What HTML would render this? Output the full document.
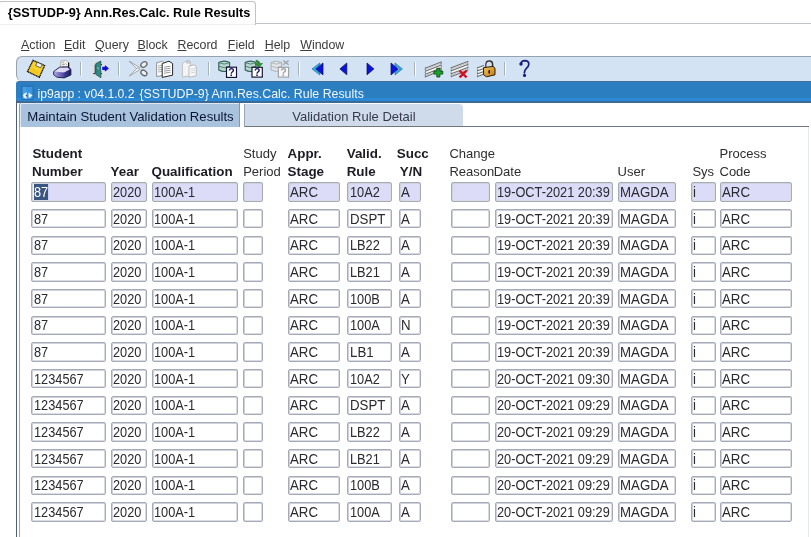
<!DOCTYPE html>
<html><head><meta charset="utf-8"><style>
html,body{margin:0;padding:0}
body{width:811px;height:537px;overflow:hidden;background:#fff;position:relative;font-family:"Liberation Sans",sans-serif}
#ttab{position:absolute;left:-2px;top:1px;width:256px;height:23px;border:1px solid #bfc3ca;border-bottom:none;border-radius:4px 4px 0 0;background:#fff}
#ttabline{position:absolute;left:255px;top:23px;width:560px;height:1px;background:#bfc3ca}
#ttext{position:absolute;left:7.8px;top:4.6px;font-weight:bold;font-size:12.75px;line-height:15px;color:#000;white-space:pre}
.m{position:absolute;top:38.3px;font-size:12.4px;line-height:14px;color:#3c3c3c;white-space:pre}
.m u{text-decoration:underline;text-underline-offset:1px}
#tb{position:absolute;left:16px;top:56px;width:820px;height:25px;border:1px solid #98a2ae;border-bottom:none;border-right:none;border-radius:6px 0 0 6px;background:#d4e3f4;box-sizing:border-box}
#wbar{position:absolute;left:16px;top:81px;width:820px;height:22px;background:linear-gradient(#45709a 0,#45709a 1px,#2b7fc1 1.5px,#2b7fc1 16.5px,#2a89d6 17px,#2a89d6 20px,#3b6a95 20.5px,#3b6a95 22px);border-radius:3px 0 0 0}
#wtext{position:absolute;left:37.6px;top:86.7px;font-size:12.2px;line-height:14px;color:#f0f8ff;white-space:pre}
#wleft{position:absolute;left:16px;top:100px;width:1px;height:440px;background:#4d5e7e}
#pleft{position:absolute;left:19px;top:126px;width:1px;height:420px;background:#9aa6b8}
#pright{position:absolute;left:808px;top:127px;width:1px;height:420px;background:#e4e8ef}
#ptop{position:absolute;left:462px;top:126px;width:347px;height:1px;background:#6f7782}
#tab1{position:absolute;left:19px;top:103px;width:221px;height:23.6px;background:#a9c3df;border-left:1px solid #8d9db2;border-right:1px solid #7f98b4;box-sizing:border-box;box-shadow:inset 1px 1px 0 #dfe9f4;border-radius:2px 0 0 0}
#tab1t{position:absolute;left:27.2px;top:109px;font-size:13.15px;line-height:15px;color:#081530;white-space:pre}
#tab2{position:absolute;left:243.5px;top:104px;width:218px;height:22px;background:#cfdbeb;border-left:1px solid #9aa6b8;border-bottom:1px solid #6f7782;border-radius:0 4px 0 0}
#tab2t{position:absolute;left:292.3px;top:109px;font-size:13px;line-height:15px;color:#343a4a;white-space:pre}
.h{position:absolute;font-size:13px;line-height:15px;color:#2e2e2e;white-space:pre}
.h.b{font-weight:bold;color:#1c1c24;font-size:13.4px}
.f{position:absolute;height:19.4px;border:1px solid #a6abb7;box-shadow:inset 1px 1px 0 #cdd1d9,inset -1px -1px 0 #d8dbe2;border-radius:2px;background:#fff;box-sizing:border-box}
.f.hl{background:#dcdcf9}
.t{position:absolute;left:1.3px;top:0.7px;font-size:14.5px;line-height:17px;color:#2a2a30;white-space:pre;transform:scaleX(0.915);transform-origin:0 0}
.t.d{transform:scaleX(0.88)}
.sel{background:#3b5581;color:#fff}
</style></head><body><div id="root" style="position:absolute;left:0;top:0;width:811px;height:537px;overflow:hidden;will-change:transform">
<div id="ttab"></div><div id="ttabline"></div><div style="position:absolute;left:0;top:24px;width:255px;height:1px;background:#eceef1"></div>
<div id="ttext">{SSTUDP-9} Ann.Res.Calc. Rule Results</div>
<div class="m" style="left:21.0px"><u>A</u>ction</div>
<div class="m" style="left:64.0px"><u>E</u>dit</div>
<div class="m" style="left:95.1px"><u>Q</u>uery</div>
<div class="m" style="left:137.4px"><u>B</u>lock</div>
<div class="m" style="left:177.5px"><u>R</u>ecord</div>
<div class="m" style="left:227.8px"><u>F</u>ield</div>
<div class="m" style="left:264.7px"><u>H</u>elp</div>
<div class="m" style="left:300.2px"><u>W</u>indow</div>
<div id="tb"></div>
<div id="wbar"></div>
<div id="wtext">ip9app : v04.1.0.2 <span style="display:inline-block;width:1.6px"></span><span style="font-size:12.35px">{SSTUDP-9} Ann.Res.Calc. Rule Results</span></div>
<div id="wleft"></div>
<div id="tab1"></div><div id="tab1t">Maintain Student Validation Results</div>
<div id="tab2"></div><div id="tab2t">Validation Rule Detail</div>
<div id="ptop"></div><div id="pleft"></div><div id="pright"></div>
<svg style="position:absolute;left:0;top:0" width="811" height="110" viewBox="0 0 811 110">
<defs>
<linearGradient id="prn" x1="0" y1="0" x2="1" y2="0"><stop offset="0" stop-color="#b4acdf"/><stop offset="0.35" stop-color="#7a70c0"/><stop offset="0.65" stop-color="#3c3890"/><stop offset="1" stop-color="#1a1a5c"/></linearGradient>
<linearGradient id="lock" x1="0" y1="0" x2="1" y2="1"><stop offset="0" stop-color="#f7c85a"/><stop offset="1" stop-color="#c07818"/></linearGradient>
</defs>
<!-- separators -->
<g stroke-width="1">
<path d="M80.5 62v13.5M118.5 62v13.5M208.5 62v13.5M298.5 62v13.5M414.5 62v13.5M504.5 62v13.5" stroke="#a9b1bb"/>
<path d="M81.5 62v13.5M119.5 62v13.5M209.5 62v13.5M299.5 62v13.5M415.5 62v13.5M505.5 62v13.5" stroke="#ffffff"/>
</g>
<!-- floppy -->
<polygon points="33,60.3 44.6,65.6 39.3,77.3 27.5,71.6" fill="#f6d22a" stroke="#111111" stroke-width="1.35" stroke-dasharray="1.3 0.45"/>
<polygon points="37.2,62.2 42.2,64.5 40.6,67.8 35.8,65.6" fill="#f2f2ee" stroke="#333" stroke-width="0.7"/>
<polygon points="31.5,68 39,71.5 37.6,74.5 30.1,71" fill="#f0c020" opacity="0.6"/>
<!-- printer -->
<path d="M60.6 67.8 L60.9 61.2 L65.6 60.3 L68.6 62.6 L68.7 68.2 Z" fill="#f6f6f2" stroke="#9a9a9a" stroke-width="0.8"/>
<path d="M68.6 62.6 L68.7 68.2" stroke="#111" stroke-width="1.2"/>
<path d="M62.2 62.8h2.2M62.2 64.6h2.6M62.2 66.4h2.2M65.5 63.5l1.8 1.6" stroke="#8a8a80" stroke-width="0.8"/>
<path d="M53.6 71.6 L59.5 67.2 L67.8 66.8 L70.9 69.2 L70.9 75 L64.2 77.9 L57.2 77.3 L53.7 74.8 Z" fill="url(#prn)" stroke="#181848" stroke-width="0.9"/>
<path d="M54.5 71.4 L59.8 67.8 L67.6 67.5 L69.8 69.4 L64 72.4 Z" fill="#e4e0f6" opacity="0.95"/>
<path d="M57 74.3 L63 75.3" stroke="#6a62b0" stroke-width="0.8" opacity="0.6"/>
<!-- exit door -->
<rect x="91.5" y="61" width="15" height="16" fill="#e8e0b8" opacity="0.22"/>
<path d="M95.2 64.6 V73.6 H93.2" stroke="#2a2a2a" stroke-width="1" fill="none"/>
<path d="M95.8 63.6 L100.8 61 L100.9 77.8 L95.8 74.4 Z" fill="#2e8a84" stroke="#1c4846" stroke-width="0.7"/>
<path d="M97.5 67 L98.6 69.5" stroke="#a8e0d8" stroke-width="0.8"/>
<path d="M101 64.6 H102 M101 73.6 H102" stroke="#222" stroke-width="1"/>
<path d="M101.8 66.3 H104.6 V64.2 L109.4 68.4 L104.6 72.6 V70.5 H101.8 Z" fill="#1010d8" stroke="#ffffff" stroke-width="0.7"/>
<!-- scissors -->
<path d="M129.2 61.2 L139.6 67.4 L138 69.8 Z" fill="#fbfbfb" stroke="#8c9096" stroke-width="0.8" stroke-linejoin="round"/>
<path d="M129.2 76 L139.6 69.8 L138 67.4 Z" fill="#fbfbfb" stroke="#8c9096" stroke-width="0.8" stroke-linejoin="round"/>
<ellipse cx="143.9" cy="64.5" rx="3.3" ry="2.4" fill="#eef0f2" stroke="#64686e" stroke-width="1.3" transform="rotate(-35 143.9 64.5)"/>
<ellipse cx="143.9" cy="72.9" rx="3.3" ry="2.4" fill="#eef0f2" stroke="#64686e" stroke-width="1.3" transform="rotate(35 143.9 72.9)"/>
<!-- copy -->
<path d="M156.6 62.8 L162.5 61.2 L164 62.6 L163.5 75.2 L156.6 76.6 Z" fill="#fbfbfb" stroke="#7a7e84" stroke-width="0.8"/>
<path d="M158 66l4 -0.6M158 68l4 -0.6M158 70l4 -0.6M158 72l4 -0.6" stroke="#8c9096" stroke-width="0.7"/>
<path d="M162.2 63.5 L169 61.2 L172.6 63.5 L172.6 75.2 L162.2 77.4 Z" fill="#ffffff" stroke="#1a1a1a" stroke-width="0.95"/>
<path d="M164 67.2l6.5 -1M164 69.2l6.5 -1M164 71.2l6.5 -1M164 73.2l6.5 -1" stroke="#777b80" stroke-width="0.75"/>
<!-- paste (disabled) -->
<path d="M182.4 63 L188 60.4 L190.5 62 L190.2 75.8 L182.4 77 Z" fill="#f4f4f4" stroke="#b4b8bc" stroke-width="0.8"/>
<path d="M186.5 61 h3 v2.2 h-3z" fill="#d8d8d8" stroke="#b0b4b8" stroke-width="0.6"/>
<path d="M189 66.2 L194 64.8 L196.2 66.2 L196.2 75.8 L189 77.2 Z" fill="#fbfbfb" stroke="#a8acb0" stroke-width="0.8"/>
<path d="M190.5 69l4.5 -0.7M190.5 71l4.5 -0.7M190.5 73l4.5 -0.7" stroke="#c0c4c8" stroke-width="0.7"/>
<!-- query 1 -->
<g>
<path d="M218.8 62.6 Q224.2 59.6 229.6 62.6 V70 Q224.2 73 218.8 70 Z" fill="#b8d6ce" stroke="#2c5c54" stroke-width="1.1"/>
<path d="M218.8 62.6 Q224.2 65.6 229.6 62.6 M218.8 66.2 Q224.2 69.2 229.6 66.2" stroke="#3a6a62" stroke-width="0.8" fill="none"/>
<rect x="226.5" y="67.2" width="10" height="10.2" fill="#ffffff" stroke="#101030" stroke-width="1.15"/>
<text x="231.5" y="76.2" font-family="Liberation Sans" font-weight="bold" font-size="10.5" fill="#101060" text-anchor="middle">?</text>
</g>
<!-- query 2 (execute) -->
<g>
<path d="M245.2 62.6 Q250.5 59.6 255.9 62.6 V70 Q250.5 73 245.2 70 Z" fill="#b8d6ce" stroke="#2c5c54" stroke-width="1.1"/>
<path d="M245.2 62.6 Q250.5 65.6 255.9 62.6 M245.2 66.2 Q250.5 69.2 255.9 66.2" stroke="#3a6a62" stroke-width="0.8" fill="none"/>
<path d="M256 60.2 Q259.5 60.6 260.2 63.6 L262.6 63.4 L258.8 67.6 L255.2 63.8 L257.6 63.8 Q257.2 62 256 61.8 Z" fill="#2c9a2c" stroke="#1a5a1a" stroke-width="0.5"/>
<rect x="252" y="67.3" width="10.3" height="9.8" fill="#ffffff" stroke="#101030" stroke-width="1.15"/>
<text x="257.2" y="76.2" font-family="Liberation Sans" font-weight="bold" font-size="10.5" fill="#101060" text-anchor="middle">?</text>
</g>
<!-- query 3 (cancel, disabled) -->
<g>
<path d="M271 62.6 Q276.3 59.6 281.6 62.6 V70 Q276.3 73 271 70 Z" fill="#e0e4e6" stroke="#a8aeb2" stroke-width="1"/>
<path d="M271 62.6 Q276.3 65.6 281.6 62.6 M271 66.2 Q276.3 69.2 281.6 66.2" stroke="#a8aeb2" stroke-width="0.8" fill="none"/>
<path d="M283.2 60.5 L288.6 64.8 M288.6 60.5 L283.2 64.8" stroke="#9ca0a4" stroke-width="1.2"/>
<rect x="278.3" y="67.3" width="10.3" height="9.8" fill="#f8f8f8" stroke="#9a9ea2" stroke-width="1.1"/>
<text x="283.5" y="76.2" font-family="Liberation Sans" font-weight="bold" font-size="10.5" fill="#9a9ea2" text-anchor="middle">?</text>
</g>
<!-- nav -->
<path d="M319.8 63 L312 68.9 L319.8 74.9 L319.8 72.6 L315 68.9 L319.8 65.2 Z" fill="#30b4e8" stroke="#1a5a90" stroke-width="0.6"/>
<path d="M323 63 L316 68.9 L323 74.9 Z" fill="#0a14e0" stroke="#06085a" stroke-width="0.7"/>
<path d="M346.8 63 L339.9 68.9 L346.8 74.8 Z" fill="#0a14e0" stroke="#06085a" stroke-width="0.7"/>
<path d="M367 63 L373.9 68.9 L367 74.8 Z" fill="#0a14e0" stroke="#06085a" stroke-width="0.7"/>
<path d="M391 63 L398.1 68.9 L391 74.9 Z" fill="#0a14e0" stroke="#06085a" stroke-width="0.7"/>
<path d="M395 63 L402.4 68.9 L395 74.9 L395 72.6 L399.8 68.9 L395 65.2 Z" fill="#30b4e8" stroke="#1a5a90" stroke-width="0.6"/>
<!-- insert record -->
<g>
<path d="M425.3 68.2 L441.3 62 L441.3 70.6 L425.3 76.8 Z" fill="#f6f6f4"/>
<path d="M425.3 68.2 L441.3 62 M425.3 71.2 L441.3 65 M425.3 74.2 L441.3 68 M425.3 76.8 L441.3 70.6" stroke="#6a6e72" stroke-width="1.1"/>
<path d="M425.3 69.5 L441.3 63.3 M425.3 75.5 L441.3 69.3" stroke="#c4c6c8" stroke-width="1.2"/>
<path d="M425.3 67.5 V77.5 M441.3 61.6 V71" stroke="#4a4e52" stroke-width="0.8" stroke-dasharray="1 0.5"/>
<path d="M436.8 68.2 H439.9 V71.1 H442.8 V74.1 H439.9 V77 H436.8 V74.1 H433.9 V71.1 H436.8 Z" fill="#1aa42c" stroke="#0a4012" stroke-width="0.8"/>
</g>
<!-- delete record -->
<g>
<path d="M451.2 67.8 L467.8 61.6 L467.8 70.2 L451.2 76.4 Z" fill="#f6f6f4"/>
<path d="M451.2 67.8 L467.8 61.6 M451.2 70.8 L467.8 64.6 M451.2 73.8 L467.8 67.6 M451.2 76.4 L467.8 70.2" stroke="#6a6e72" stroke-width="1.1"/>
<path d="M451.2 69.1 L467.8 62.9 M451.2 75.1 L467.8 68.9" stroke="#c4c6c8" stroke-width="1.2"/>
<path d="M451.2 67.2 V77.2 M467.8 61 V70.6" stroke="#4a4e52" stroke-width="0.8" stroke-dasharray="1 0.5"/>
<path d="M459.6 70.6 L466.6 77.4 M466.6 70.6 L459.6 77.4" stroke="#d41020" stroke-width="2.3"/>
</g>
<!-- lock record -->
<g>
<path d="M477.5 67.8 L484 65.4 L484 74 L477.5 76.4 Z" fill="#f6f6f4"/>
<path d="M477.5 67.8 L484 65.4 M477.5 70.8 L484 68.4 M477.5 73.8 L484 71.4 M477.5 76.4 L484 74" stroke="#6a6e72" stroke-width="1.1"/>
<path d="M477.5 67.2 V77.2" stroke="#4a4e52" stroke-width="0.8" stroke-dasharray="1 0.5"/>
<path d="M486 67.5 V64.6 Q486 61 489.3 61 Q492.6 61 492.6 64.6 V67.2" stroke="#2e2e2e" stroke-width="1.5" fill="none"/>
<path d="M486.6 67 V64.8 Q486.6 61.8 489.3 61.8" stroke="#d8d8d8" stroke-width="0.6" fill="none"/>
<path d="M483.6 67.6 L493 66.4 L495 68.2 L495 74.8 L486.6 76.8 L483.6 74.8 Z" fill="url(#lock)" stroke="#2a1c08" stroke-width="1"/>
<path d="M488.4 70.2 L490 70 L490 73.4 L488.4 73.6 Z" fill="#2a1a08"/>
</g>
<!-- help -->
<path d="M520.8 63.8 Q521.4 60.6 524.8 60.6 Q528.9 60.8 528.8 64.2 Q528.6 66.8 526.2 68.6 Q524.5 70 524.4 72.8" stroke="#1c1c80" stroke-width="1.75" fill="none" stroke-linecap="round"/>
<circle cx="521" cy="64" r="1.7" fill="#1c1c80"/>
<circle cx="524.5" cy="75.4" r="1.6" fill="#1c1c80"/>
<!-- window icon -->
<rect x="22" y="86.2" width="11" height="13.4" fill="#3b95dc" stroke="#2068ac" stroke-width="0.9"/>
<rect x="22.6" y="86.8" width="3.5" height="12.2" fill="#55a8ea" opacity="0.5"/>
<path d="M26.6 92.2 L26.6 99 L25.6 98.6 L25 97.8 L23.6 97.8 L23.6 96.4 L22.8 95.6 L23.6 94.8 L23.6 93.4 L25 93.4 L25.6 92.6 Z" fill="#f4fbff"/>
<circle cx="26.4" cy="95.6" r="0.9" fill="#2a6aa8"/>
<path d="M28.6 92.6 L32.6 95.6 L28.6 98.6 Z" fill="#f4fbff"/>
</svg>

<div class="h b" style="left:32.4px;top:145.8px">Student</div>
<div class="h b" style="left:32.0px;top:163.7px">Number</div>
<div class="h b" style="left:110.6px;top:163.7px">Year</div>
<div class="h b" style="left:151.5px;top:163.7px">Qualification</div>
<div class="h" style="left:243.2px;top:145.8px">Study</div>
<div class="h" style="left:243.2px;top:163.7px">Period</div>
<div class="h b" style="left:287.6px;top:145.8px">Appr.</div>
<div class="h b" style="left:287.6px;top:163.7px">Stage</div>
<div class="h b" style="left:346.7px;top:145.8px">Valid.</div>
<div class="h b" style="left:346.7px;top:163.7px">Rule</div>
<div class="h b" style="left:396.8px;top:145.8px">Succ</div>
<div class="h b" style="left:399.8px;top:163.7px">Y/N</div>
<div class="h" style="left:449.4px;top:145.8px">Change</div>
<div class="h" style="left:449.4px;top:163.7px">Reason</div>
<div class="h" style="left:493.7px;top:163.7px">Date</div>
<div class="h" style="left:617.6px;top:163.7px">User</div>
<div class="h" style="left:692.4px;top:163.7px">Sys</div>
<div class="h" style="left:719.5px;top:145.8px">Process</div>
<div class="h" style="left:719.5px;top:163.7px">Code</div>
<div class="f hl" style="left:31.3px;top:182.20px;width:74.5px"><span class="t d"><span class="sel">87</span></span></div>
<div class="f hl" style="left:110.5px;top:182.20px;width:36.3px"><span class="t d">2020</span></div>
<div class="f hl" style="left:151.5px;top:182.20px;width:86.5px"><span class="t d">100A-1</span></div>
<div class="f hl" style="left:243.3px;top:182.20px;width:19.4px"></div>
<div class="f hl" style="left:288.0px;top:182.20px;width:51.9px"><span class="t">ARC</span></div>
<div class="f hl" style="left:347.3px;top:182.20px;width:45.0px"><span class="t d">10A2</span></div>
<div class="f hl" style="left:399.0px;top:182.20px;width:22.2px"><span class="t">A</span></div>
<div class="f hl" style="left:450.7px;top:182.20px;width:39.7px"></div>
<div class="f hl" style="left:494.7px;top:182.20px;width:118.3px"><span class="t d">19-OCT-2021 20:39</span></div>
<div class="f hl" style="left:618.2px;top:182.20px;width:57.6px"><span class="t">MAGDA</span></div>
<div class="f hl" style="left:691.2px;top:182.20px;width:24.8px"><span class="t">i</span></div>
<div class="f hl" style="left:720.0px;top:182.20px;width:72.2px"><span class="t">ARC</span></div>
<div class="f" style="left:31.3px;top:208.88px;width:74.5px"><span class="t d">87</span></div>
<div class="f" style="left:110.5px;top:208.88px;width:36.3px"><span class="t d">2020</span></div>
<div class="f" style="left:151.5px;top:208.88px;width:86.5px"><span class="t d">100A-1</span></div>
<div class="f" style="left:243.3px;top:208.88px;width:19.4px"></div>
<div class="f" style="left:288.0px;top:208.88px;width:51.9px"><span class="t">ARC</span></div>
<div class="f" style="left:347.3px;top:208.88px;width:45.0px"><span class="t">DSPT</span></div>
<div class="f" style="left:399.0px;top:208.88px;width:22.2px"><span class="t">A</span></div>
<div class="f" style="left:450.7px;top:208.88px;width:39.7px"></div>
<div class="f" style="left:494.7px;top:208.88px;width:118.3px"><span class="t d">19-OCT-2021 20:39</span></div>
<div class="f" style="left:618.2px;top:208.88px;width:57.6px"><span class="t">MAGDA</span></div>
<div class="f" style="left:691.2px;top:208.88px;width:24.8px"><span class="t">i</span></div>
<div class="f" style="left:720.0px;top:208.88px;width:72.2px"><span class="t">ARC</span></div>
<div class="f" style="left:31.3px;top:235.56px;width:74.5px"><span class="t d">87</span></div>
<div class="f" style="left:110.5px;top:235.56px;width:36.3px"><span class="t d">2020</span></div>
<div class="f" style="left:151.5px;top:235.56px;width:86.5px"><span class="t d">100A-1</span></div>
<div class="f" style="left:243.3px;top:235.56px;width:19.4px"></div>
<div class="f" style="left:288.0px;top:235.56px;width:51.9px"><span class="t">ARC</span></div>
<div class="f" style="left:347.3px;top:235.56px;width:45.0px"><span class="t d">LB22</span></div>
<div class="f" style="left:399.0px;top:235.56px;width:22.2px"><span class="t">A</span></div>
<div class="f" style="left:450.7px;top:235.56px;width:39.7px"></div>
<div class="f" style="left:494.7px;top:235.56px;width:118.3px"><span class="t d">19-OCT-2021 20:39</span></div>
<div class="f" style="left:618.2px;top:235.56px;width:57.6px"><span class="t">MAGDA</span></div>
<div class="f" style="left:691.2px;top:235.56px;width:24.8px"><span class="t">i</span></div>
<div class="f" style="left:720.0px;top:235.56px;width:72.2px"><span class="t">ARC</span></div>
<div class="f" style="left:31.3px;top:262.24px;width:74.5px"><span class="t d">87</span></div>
<div class="f" style="left:110.5px;top:262.24px;width:36.3px"><span class="t d">2020</span></div>
<div class="f" style="left:151.5px;top:262.24px;width:86.5px"><span class="t d">100A-1</span></div>
<div class="f" style="left:243.3px;top:262.24px;width:19.4px"></div>
<div class="f" style="left:288.0px;top:262.24px;width:51.9px"><span class="t">ARC</span></div>
<div class="f" style="left:347.3px;top:262.24px;width:45.0px"><span class="t d">LB21</span></div>
<div class="f" style="left:399.0px;top:262.24px;width:22.2px"><span class="t">A</span></div>
<div class="f" style="left:450.7px;top:262.24px;width:39.7px"></div>
<div class="f" style="left:494.7px;top:262.24px;width:118.3px"><span class="t d">19-OCT-2021 20:39</span></div>
<div class="f" style="left:618.2px;top:262.24px;width:57.6px"><span class="t">MAGDA</span></div>
<div class="f" style="left:691.2px;top:262.24px;width:24.8px"><span class="t">i</span></div>
<div class="f" style="left:720.0px;top:262.24px;width:72.2px"><span class="t">ARC</span></div>
<div class="f" style="left:31.3px;top:288.92px;width:74.5px"><span class="t d">87</span></div>
<div class="f" style="left:110.5px;top:288.92px;width:36.3px"><span class="t d">2020</span></div>
<div class="f" style="left:151.5px;top:288.92px;width:86.5px"><span class="t d">100A-1</span></div>
<div class="f" style="left:243.3px;top:288.92px;width:19.4px"></div>
<div class="f" style="left:288.0px;top:288.92px;width:51.9px"><span class="t">ARC</span></div>
<div class="f" style="left:347.3px;top:288.92px;width:45.0px"><span class="t d">100B</span></div>
<div class="f" style="left:399.0px;top:288.92px;width:22.2px"><span class="t">A</span></div>
<div class="f" style="left:450.7px;top:288.92px;width:39.7px"></div>
<div class="f" style="left:494.7px;top:288.92px;width:118.3px"><span class="t d">19-OCT-2021 20:39</span></div>
<div class="f" style="left:618.2px;top:288.92px;width:57.6px"><span class="t">MAGDA</span></div>
<div class="f" style="left:691.2px;top:288.92px;width:24.8px"><span class="t">i</span></div>
<div class="f" style="left:720.0px;top:288.92px;width:72.2px"><span class="t">ARC</span></div>
<div class="f" style="left:31.3px;top:315.60px;width:74.5px"><span class="t d">87</span></div>
<div class="f" style="left:110.5px;top:315.60px;width:36.3px"><span class="t d">2020</span></div>
<div class="f" style="left:151.5px;top:315.60px;width:86.5px"><span class="t d">100A-1</span></div>
<div class="f" style="left:243.3px;top:315.60px;width:19.4px"></div>
<div class="f" style="left:288.0px;top:315.60px;width:51.9px"><span class="t">ARC</span></div>
<div class="f" style="left:347.3px;top:315.60px;width:45.0px"><span class="t d">100A</span></div>
<div class="f" style="left:399.0px;top:315.60px;width:22.2px"><span class="t">N</span></div>
<div class="f" style="left:450.7px;top:315.60px;width:39.7px"></div>
<div class="f" style="left:494.7px;top:315.60px;width:118.3px"><span class="t d">19-OCT-2021 20:39</span></div>
<div class="f" style="left:618.2px;top:315.60px;width:57.6px"><span class="t">MAGDA</span></div>
<div class="f" style="left:691.2px;top:315.60px;width:24.8px"><span class="t">i</span></div>
<div class="f" style="left:720.0px;top:315.60px;width:72.2px"><span class="t">ARC</span></div>
<div class="f" style="left:31.3px;top:342.28px;width:74.5px"><span class="t d">87</span></div>
<div class="f" style="left:110.5px;top:342.28px;width:36.3px"><span class="t d">2020</span></div>
<div class="f" style="left:151.5px;top:342.28px;width:86.5px"><span class="t d">100A-1</span></div>
<div class="f" style="left:243.3px;top:342.28px;width:19.4px"></div>
<div class="f" style="left:288.0px;top:342.28px;width:51.9px"><span class="t">ARC</span></div>
<div class="f" style="left:347.3px;top:342.28px;width:45.0px"><span class="t">LB1</span></div>
<div class="f" style="left:399.0px;top:342.28px;width:22.2px"><span class="t">A</span></div>
<div class="f" style="left:450.7px;top:342.28px;width:39.7px"></div>
<div class="f" style="left:494.7px;top:342.28px;width:118.3px"><span class="t d">19-OCT-2021 20:39</span></div>
<div class="f" style="left:618.2px;top:342.28px;width:57.6px"><span class="t">MAGDA</span></div>
<div class="f" style="left:691.2px;top:342.28px;width:24.8px"><span class="t">i</span></div>
<div class="f" style="left:720.0px;top:342.28px;width:72.2px"><span class="t">ARC</span></div>
<div class="f" style="left:31.3px;top:368.96px;width:74.5px"><span class="t d">1234567</span></div>
<div class="f" style="left:110.5px;top:368.96px;width:36.3px"><span class="t d">2020</span></div>
<div class="f" style="left:151.5px;top:368.96px;width:86.5px"><span class="t d">100A-1</span></div>
<div class="f" style="left:243.3px;top:368.96px;width:19.4px"></div>
<div class="f" style="left:288.0px;top:368.96px;width:51.9px"><span class="t">ARC</span></div>
<div class="f" style="left:347.3px;top:368.96px;width:45.0px"><span class="t d">10A2</span></div>
<div class="f" style="left:399.0px;top:368.96px;width:22.2px"><span class="t">Y</span></div>
<div class="f" style="left:450.7px;top:368.96px;width:39.7px"></div>
<div class="f" style="left:494.7px;top:368.96px;width:118.3px"><span class="t d">20-OCT-2021 09:30</span></div>
<div class="f" style="left:618.2px;top:368.96px;width:57.6px"><span class="t">MAGDA</span></div>
<div class="f" style="left:691.2px;top:368.96px;width:24.8px"><span class="t">i</span></div>
<div class="f" style="left:720.0px;top:368.96px;width:72.2px"><span class="t">ARC</span></div>
<div class="f" style="left:31.3px;top:395.64px;width:74.5px"><span class="t d">1234567</span></div>
<div class="f" style="left:110.5px;top:395.64px;width:36.3px"><span class="t d">2020</span></div>
<div class="f" style="left:151.5px;top:395.64px;width:86.5px"><span class="t d">100A-1</span></div>
<div class="f" style="left:243.3px;top:395.64px;width:19.4px"></div>
<div class="f" style="left:288.0px;top:395.64px;width:51.9px"><span class="t">ARC</span></div>
<div class="f" style="left:347.3px;top:395.64px;width:45.0px"><span class="t">DSPT</span></div>
<div class="f" style="left:399.0px;top:395.64px;width:22.2px"><span class="t">A</span></div>
<div class="f" style="left:450.7px;top:395.64px;width:39.7px"></div>
<div class="f" style="left:494.7px;top:395.64px;width:118.3px"><span class="t d">20-OCT-2021 09:29</span></div>
<div class="f" style="left:618.2px;top:395.64px;width:57.6px"><span class="t">MAGDA</span></div>
<div class="f" style="left:691.2px;top:395.64px;width:24.8px"><span class="t">i</span></div>
<div class="f" style="left:720.0px;top:395.64px;width:72.2px"><span class="t">ARC</span></div>
<div class="f" style="left:31.3px;top:422.32px;width:74.5px"><span class="t d">1234567</span></div>
<div class="f" style="left:110.5px;top:422.32px;width:36.3px"><span class="t d">2020</span></div>
<div class="f" style="left:151.5px;top:422.32px;width:86.5px"><span class="t d">100A-1</span></div>
<div class="f" style="left:243.3px;top:422.32px;width:19.4px"></div>
<div class="f" style="left:288.0px;top:422.32px;width:51.9px"><span class="t">ARC</span></div>
<div class="f" style="left:347.3px;top:422.32px;width:45.0px"><span class="t d">LB22</span></div>
<div class="f" style="left:399.0px;top:422.32px;width:22.2px"><span class="t">A</span></div>
<div class="f" style="left:450.7px;top:422.32px;width:39.7px"></div>
<div class="f" style="left:494.7px;top:422.32px;width:118.3px"><span class="t d">20-OCT-2021 09:29</span></div>
<div class="f" style="left:618.2px;top:422.32px;width:57.6px"><span class="t">MAGDA</span></div>
<div class="f" style="left:691.2px;top:422.32px;width:24.8px"><span class="t">i</span></div>
<div class="f" style="left:720.0px;top:422.32px;width:72.2px"><span class="t">ARC</span></div>
<div class="f" style="left:31.3px;top:449.00px;width:74.5px"><span class="t d">1234567</span></div>
<div class="f" style="left:110.5px;top:449.00px;width:36.3px"><span class="t d">2020</span></div>
<div class="f" style="left:151.5px;top:449.00px;width:86.5px"><span class="t d">100A-1</span></div>
<div class="f" style="left:243.3px;top:449.00px;width:19.4px"></div>
<div class="f" style="left:288.0px;top:449.00px;width:51.9px"><span class="t">ARC</span></div>
<div class="f" style="left:347.3px;top:449.00px;width:45.0px"><span class="t d">LB21</span></div>
<div class="f" style="left:399.0px;top:449.00px;width:22.2px"><span class="t">A</span></div>
<div class="f" style="left:450.7px;top:449.00px;width:39.7px"></div>
<div class="f" style="left:494.7px;top:449.00px;width:118.3px"><span class="t d">20-OCT-2021 09:29</span></div>
<div class="f" style="left:618.2px;top:449.00px;width:57.6px"><span class="t">MAGDA</span></div>
<div class="f" style="left:691.2px;top:449.00px;width:24.8px"><span class="t">i</span></div>
<div class="f" style="left:720.0px;top:449.00px;width:72.2px"><span class="t">ARC</span></div>
<div class="f" style="left:31.3px;top:475.68px;width:74.5px"><span class="t d">1234567</span></div>
<div class="f" style="left:110.5px;top:475.68px;width:36.3px"><span class="t d">2020</span></div>
<div class="f" style="left:151.5px;top:475.68px;width:86.5px"><span class="t d">100A-1</span></div>
<div class="f" style="left:243.3px;top:475.68px;width:19.4px"></div>
<div class="f" style="left:288.0px;top:475.68px;width:51.9px"><span class="t">ARC</span></div>
<div class="f" style="left:347.3px;top:475.68px;width:45.0px"><span class="t d">100B</span></div>
<div class="f" style="left:399.0px;top:475.68px;width:22.2px"><span class="t">A</span></div>
<div class="f" style="left:450.7px;top:475.68px;width:39.7px"></div>
<div class="f" style="left:494.7px;top:475.68px;width:118.3px"><span class="t d">20-OCT-2021 09:29</span></div>
<div class="f" style="left:618.2px;top:475.68px;width:57.6px"><span class="t">MAGDA</span></div>
<div class="f" style="left:691.2px;top:475.68px;width:24.8px"><span class="t">i</span></div>
<div class="f" style="left:720.0px;top:475.68px;width:72.2px"><span class="t">ARC</span></div>
<div class="f" style="left:31.3px;top:502.36px;width:74.5px"><span class="t d">1234567</span></div>
<div class="f" style="left:110.5px;top:502.36px;width:36.3px"><span class="t d">2020</span></div>
<div class="f" style="left:151.5px;top:502.36px;width:86.5px"><span class="t d">100A-1</span></div>
<div class="f" style="left:243.3px;top:502.36px;width:19.4px"></div>
<div class="f" style="left:288.0px;top:502.36px;width:51.9px"><span class="t">ARC</span></div>
<div class="f" style="left:347.3px;top:502.36px;width:45.0px"><span class="t d">100A</span></div>
<div class="f" style="left:399.0px;top:502.36px;width:22.2px"><span class="t">A</span></div>
<div class="f" style="left:450.7px;top:502.36px;width:39.7px"></div>
<div class="f" style="left:494.7px;top:502.36px;width:118.3px"><span class="t d">20-OCT-2021 09:29</span></div>
<div class="f" style="left:618.2px;top:502.36px;width:57.6px"><span class="t">MAGDA</span></div>
<div class="f" style="left:691.2px;top:502.36px;width:24.8px"><span class="t">i</span></div>
<div class="f" style="left:720.0px;top:502.36px;width:72.2px"><span class="t">ARC</span></div>
<div style="position:absolute;left:33px;top:184px;width:1px;height:16px;background:#f0f0fc"></div>
</div></body></html>
